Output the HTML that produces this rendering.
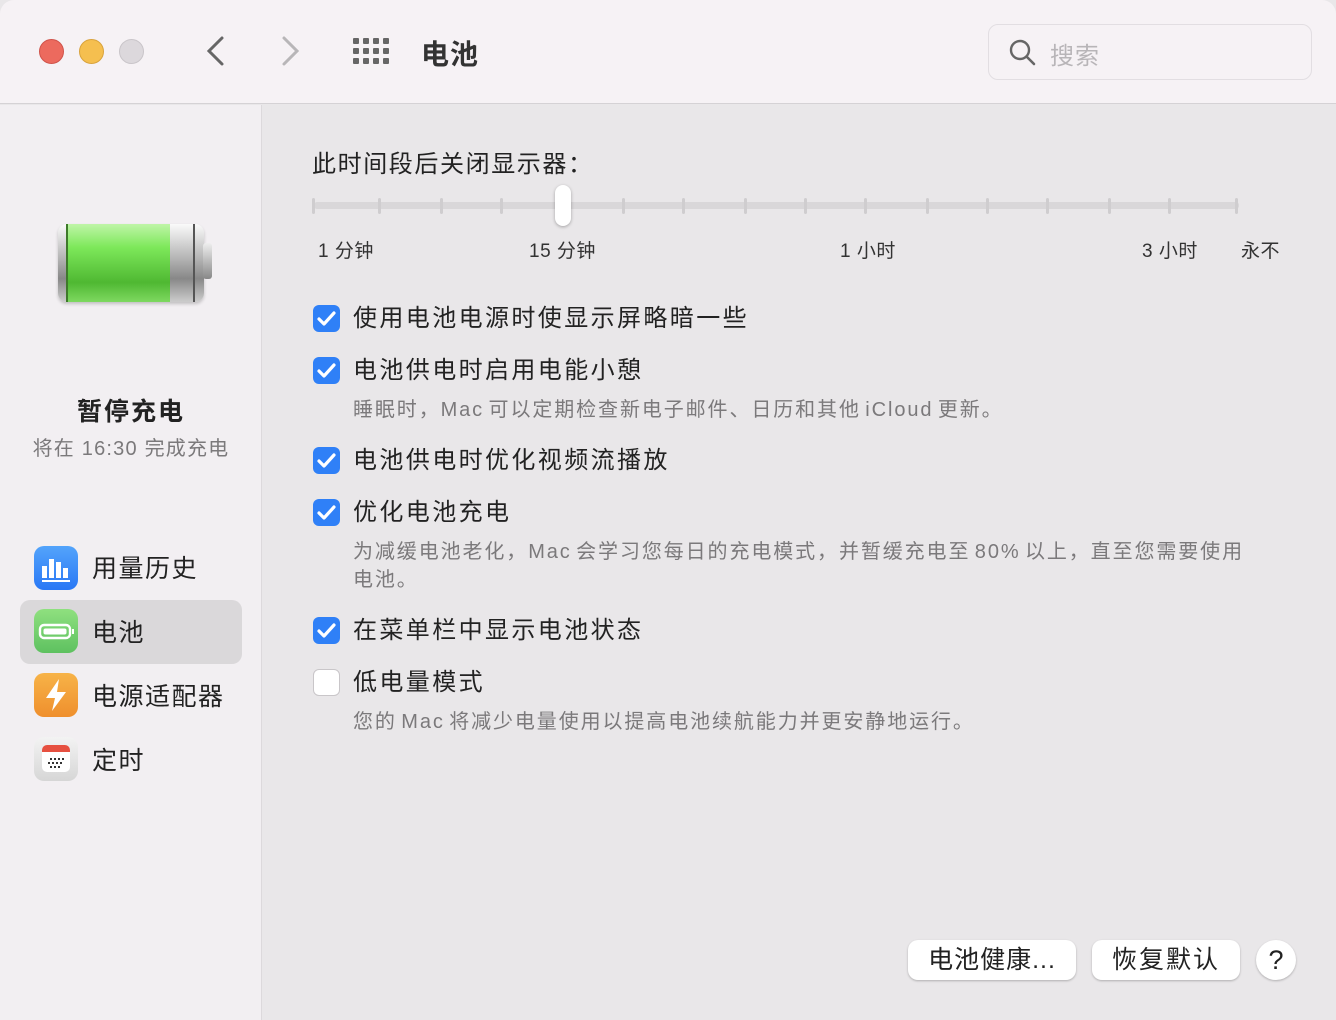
<!DOCTYPE html>
<html><head><meta charset="utf-8"><style>
*{margin:0;padding:0;box-sizing:border-box}
body{width:1336px;height:1020px;overflow:hidden;font-family:"Liberation Sans","Noto Sans CJK SC",sans-serif;background:#e9e7e9;position:relative;color:#222}
.abs{position:absolute}
.title{left:0;top:0;width:1336px;height:104px;background:#f6f2f5;border-bottom:1px solid #d5d2d5;border-radius:14px 14px 0 0}
.dot{width:25px;height:25px;border-radius:50%;top:39px}
.side{left:0;top:105px;width:262px;height:915px;background:#f2eff2;border-right:1px solid #dcd9dc}
.cb{width:27px;height:27px;border-radius:6px;background:#2f80f7;left:313px}
.cb svg{position:absolute;left:4px;top:5px}
.cb.off{background:#fff;border:1px solid #c9c6c9}
.lbl{left:353px;font-size:24px;color:#222;line-height:30px;letter-spacing:2.4px}
.sub{left:353px;font-size:20px;color:#7b797b;line-height:28px;letter-spacing:1.9px;word-spacing:-3px;white-space:nowrap}
.tick{width:3px;height:16px;background:#cfcdcf;top:198px;border-radius:2px}
.sl{font-size:19px;top:236px;color:#333;letter-spacing:0.5px}
.icon{left:34px;width:44px;height:44px;border-radius:10px}
.nav{left:92px;font-size:25px;color:#222;letter-spacing:1.5px}
.btn{background:#fff;border-radius:10px;box-shadow:0 1px 2px rgba(0,0,0,.25);font-size:25px;text-align:center;line-height:40px;top:940px;height:40px}
</style></head><body>
<div class="abs title"></div>
<div class="abs dot" style="left:39px;background:#ec6a5e;border:1px solid #d0534a"></div>
<div class="abs dot" style="left:79px;background:#f5bf4f;border:1px solid #d9a33c"></div>
<div class="abs dot" style="left:119px;background:#dcd8dc;border:1px solid #c9c5c9"></div>
<svg class="abs" style="left:200px;top:34px" width="30" height="34"><path d="M22 4 L9 17 L22 30" fill="none" stroke="#666" stroke-width="3" stroke-linecap="round"/></svg>
<svg class="abs" style="left:276px;top:34px" width="30" height="34"><path d="M8 4 L21 17 L8 30" fill="none" stroke="#b8b6b8" stroke-width="3" stroke-linecap="round"/></svg>
<svg class="abs" style="left:353px;top:38px" width="38" height="28" fill="#666"><g id="r"><rect x="0" y="0" width="6" height="6" rx="1"/><rect x="10" y="0" width="6" height="6" rx="1"/><rect x="20" y="0" width="6" height="6" rx="1"/><rect x="30" y="0" width="6" height="6" rx="1"/></g><use href="#r" y="10"/><use href="#r" y="20"/></svg>
<div class="abs" style="left:421px;top:33px;font-size:28px;font-weight:bold;color:#333;letter-spacing:1px">电池</div>
<div class="abs" style="left:988px;top:24px;width:324px;height:56px;border:1px solid #e2dee2;border-radius:10px;background:#f6f2f5"></div>
<svg class="abs" style="left:1008px;top:38px" width="30" height="30"><circle cx="12" cy="12" r="9" fill="none" stroke="#666" stroke-width="2.4"/><path d="M19 19 L26 26" stroke="#666" stroke-width="2.6" stroke-linecap="round"/></svg>
<div class="abs" style="left:1050px;top:36px;font-size:24px;color:#b8b5b8;letter-spacing:1px">搜索</div>

<div class="abs side"></div>
<div class="abs" style="left:58px;top:224px;width:146px;height:78px;border-radius:9px;background:linear-gradient(#fafafa,#bbb 40%,#888 70%,#ccc);box-shadow:0 2px 3px rgba(0,0,0,.2)"></div>
<div class="abs" style="left:67px;top:224px;width:103px;height:78px;background:linear-gradient(#bff5a8,#7de85a 30%,#4fb832 75%,#7ed860)"></div>
<div class="abs" style="left:66px;top:224px;width:2px;height:78px;background:#3e7a2a"></div>
<div class="abs" style="left:193px;top:224px;width:2px;height:78px;background:#555"></div>
<div class="abs" style="left:203px;top:243px;width:9px;height:36px;border-radius:3px;background:linear-gradient(#eee,#888)"></div>
<div class="abs" style="left:0;width:262px;text-align:center;top:392px;font-size:25px;font-weight:bold;color:#222;letter-spacing:2px">暂停充电</div>
<div class="abs" style="left:0;width:262px;text-align:center;top:432px;font-size:20px;color:#7b797b;letter-spacing:1.2px">将在 16:30 完成充电</div>
<div class="abs" style="left:20px;top:600px;width:222px;height:64px;border-radius:10px;background:#dad8da"></div>
<div class="abs icon" style="top:546px;background:linear-gradient(#53a4fb,#2a78f5)"><svg width="44" height="44"><g fill="#fff"><rect x="8" y="20" width="5" height="12"/><rect x="15" y="13" width="5" height="19"/><rect x="22" y="16" width="5" height="16"/><rect x="29" y="22" width="5" height="10"/><rect x="8" y="34" width="28" height="2"/></g></svg></div>
<div class="abs nav" style="top:549px">用量历史</div>
<div class="abs icon" style="top:609px;background:linear-gradient(#8fe07f,#5ec160)"><svg width="44" height="44"><rect x="6" y="16" width="30" height="13" rx="4" fill="none" stroke="#fff" stroke-width="2.4"/><rect x="9.5" y="19.5" width="23" height="6" rx="2" fill="#fff"/><rect x="38" y="20" width="2" height="5" fill="#fff"/></svg></div>
<div class="abs nav" style="top:613px">电池</div>
<div class="abs icon" style="top:673px;background:linear-gradient(#f7b348,#ef8f2d)"><svg width="44" height="44"><path d="M25 6 L12 25 H21 L18 38 L32 19 H23 Z" fill="#fff"/></svg></div>
<div class="abs nav" style="top:677px">电源适配器</div>
<div class="abs icon" style="top:737px;background:linear-gradient(#f3f3f3,#d6d6d6)"><svg width="44" height="44"><rect x="8" y="8" width="28" height="27" rx="5" fill="#fff"/><path d="M8 13 a5 5 0 0 1 5 -5 h18 a5 5 0 0 1 5 5 v2 h-28z" fill="#e65040"/><g fill="#333"><rect x="16" y="21" width="2" height="2"/><rect x="20" y="21" width="2" height="2"/><rect x="24" y="21" width="2" height="2"/><rect x="28" y="21" width="2" height="2"/><rect x="14" y="25" width="2" height="2"/><rect x="18" y="25" width="2" height="2"/><rect x="22" y="25" width="2" height="2"/><rect x="26" y="25" width="2" height="2"/><rect x="16" y="29" width="2" height="2"/><rect x="20" y="29" width="2" height="2"/><rect x="24" y="29" width="2" height="2"/></g></svg></div>
<div class="abs nav" style="top:741px">定时</div>

<div class="abs" style="left:312px;top:144px;font-size:24px;color:#222;letter-spacing:1.6px">此时间段后关闭显示器：</div>
<div class="abs" style="left:314px;top:202px;width:925px;height:7px;background:#d9d7d9;border-radius:3px"></div>
<div class="abs tick" style="left:312px"></div><div class="abs tick" style="left:378px"></div><div class="abs tick" style="left:440px"></div><div class="abs tick" style="left:500px"></div><div class="abs tick" style="left:622px"></div><div class="abs tick" style="left:682px"></div><div class="abs tick" style="left:744px"></div><div class="abs tick" style="left:804px"></div><div class="abs tick" style="left:864px"></div><div class="abs tick" style="left:926px"></div><div class="abs tick" style="left:986px"></div><div class="abs tick" style="left:1046px"></div><div class="abs tick" style="left:1108px"></div><div class="abs tick" style="left:1168px"></div><div class="abs tick" style="left:1235px"></div>
<div class="abs" style="left:555px;top:185px;width:16px;height:41px;border-radius:8px;background:#fff;box-shadow:0 1px 3px rgba(0,0,0,.3)"></div>
<div class="abs sl" style="left:318px">1 分钟</div>
<div class="abs sl" style="left:529px">15 分钟</div>
<div class="abs sl" style="left:840px">1 小时</div>
<div class="abs sl" style="left:1142px">3 小时</div>
<div class="abs sl" style="left:1241px">永不</div>

<div class="abs cb" style="top:305px"><svg width="19" height="17"><path d="M2 9 L7 14 L17 3" fill="none" stroke="#fff" stroke-width="3.2" stroke-linecap="round" stroke-linejoin="round"/></svg></div>
<div class="abs lbl" style="top:304px">使用电池电源时使显示屏略暗一些</div>
<div class="abs cb" style="top:357px"><svg width="19" height="17"><path d="M2 9 L7 14 L17 3" fill="none" stroke="#fff" stroke-width="3.2" stroke-linecap="round" stroke-linejoin="round"/></svg></div>
<div class="abs lbl" style="top:356px">电池供电时启用电能小憩</div>
<div class="abs sub" style="top:396px">睡眠时，Mac 可以定期检查新电子邮件、日历和其他 iCloud 更新。</div>
<div class="abs cb" style="top:447px"><svg width="19" height="17"><path d="M2 9 L7 14 L17 3" fill="none" stroke="#fff" stroke-width="3.2" stroke-linecap="round" stroke-linejoin="round"/></svg></div>
<div class="abs lbl" style="top:446px">电池供电时优化视频流播放</div>
<div class="abs cb" style="top:499px"><svg width="19" height="17"><path d="M2 9 L7 14 L17 3" fill="none" stroke="#fff" stroke-width="3.2" stroke-linecap="round" stroke-linejoin="round"/></svg></div>
<div class="abs lbl" style="top:498px">优化电池充电</div>
<div class="abs sub" style="top:538px">为减缓电池老化，Mac 会学习您每日的充电模式，并暂缓充电至 80% 以上，直至您需要使用<br>电池。</div>
<div class="abs cb" style="top:617px"><svg width="19" height="17"><path d="M2 9 L7 14 L17 3" fill="none" stroke="#fff" stroke-width="3.2" stroke-linecap="round" stroke-linejoin="round"/></svg></div>
<div class="abs lbl" style="top:616px">在菜单栏中显示电池状态</div>
<div class="abs cb off" style="top:669px"></div>
<div class="abs lbl" style="top:668px">低电量模式</div>
<div class="abs sub" style="top:708px">您的 Mac 将减少电量使用以提高电池续航能力并更安静地运行。</div>

<div class="abs btn" style="left:908px;width:168px;letter-spacing:1px">电池健康...</div>
<div class="abs btn" style="left:1092px;width:148px;letter-spacing:2px">恢复默认</div>
<div class="abs" style="left:1256px;top:940px;width:40px;height:40px;border-radius:50%;background:#fff;box-shadow:0 1px 2px rgba(0,0,0,.25);text-align:center;line-height:40px;font-size:27px;color:#222">?</div>
</body></html>
